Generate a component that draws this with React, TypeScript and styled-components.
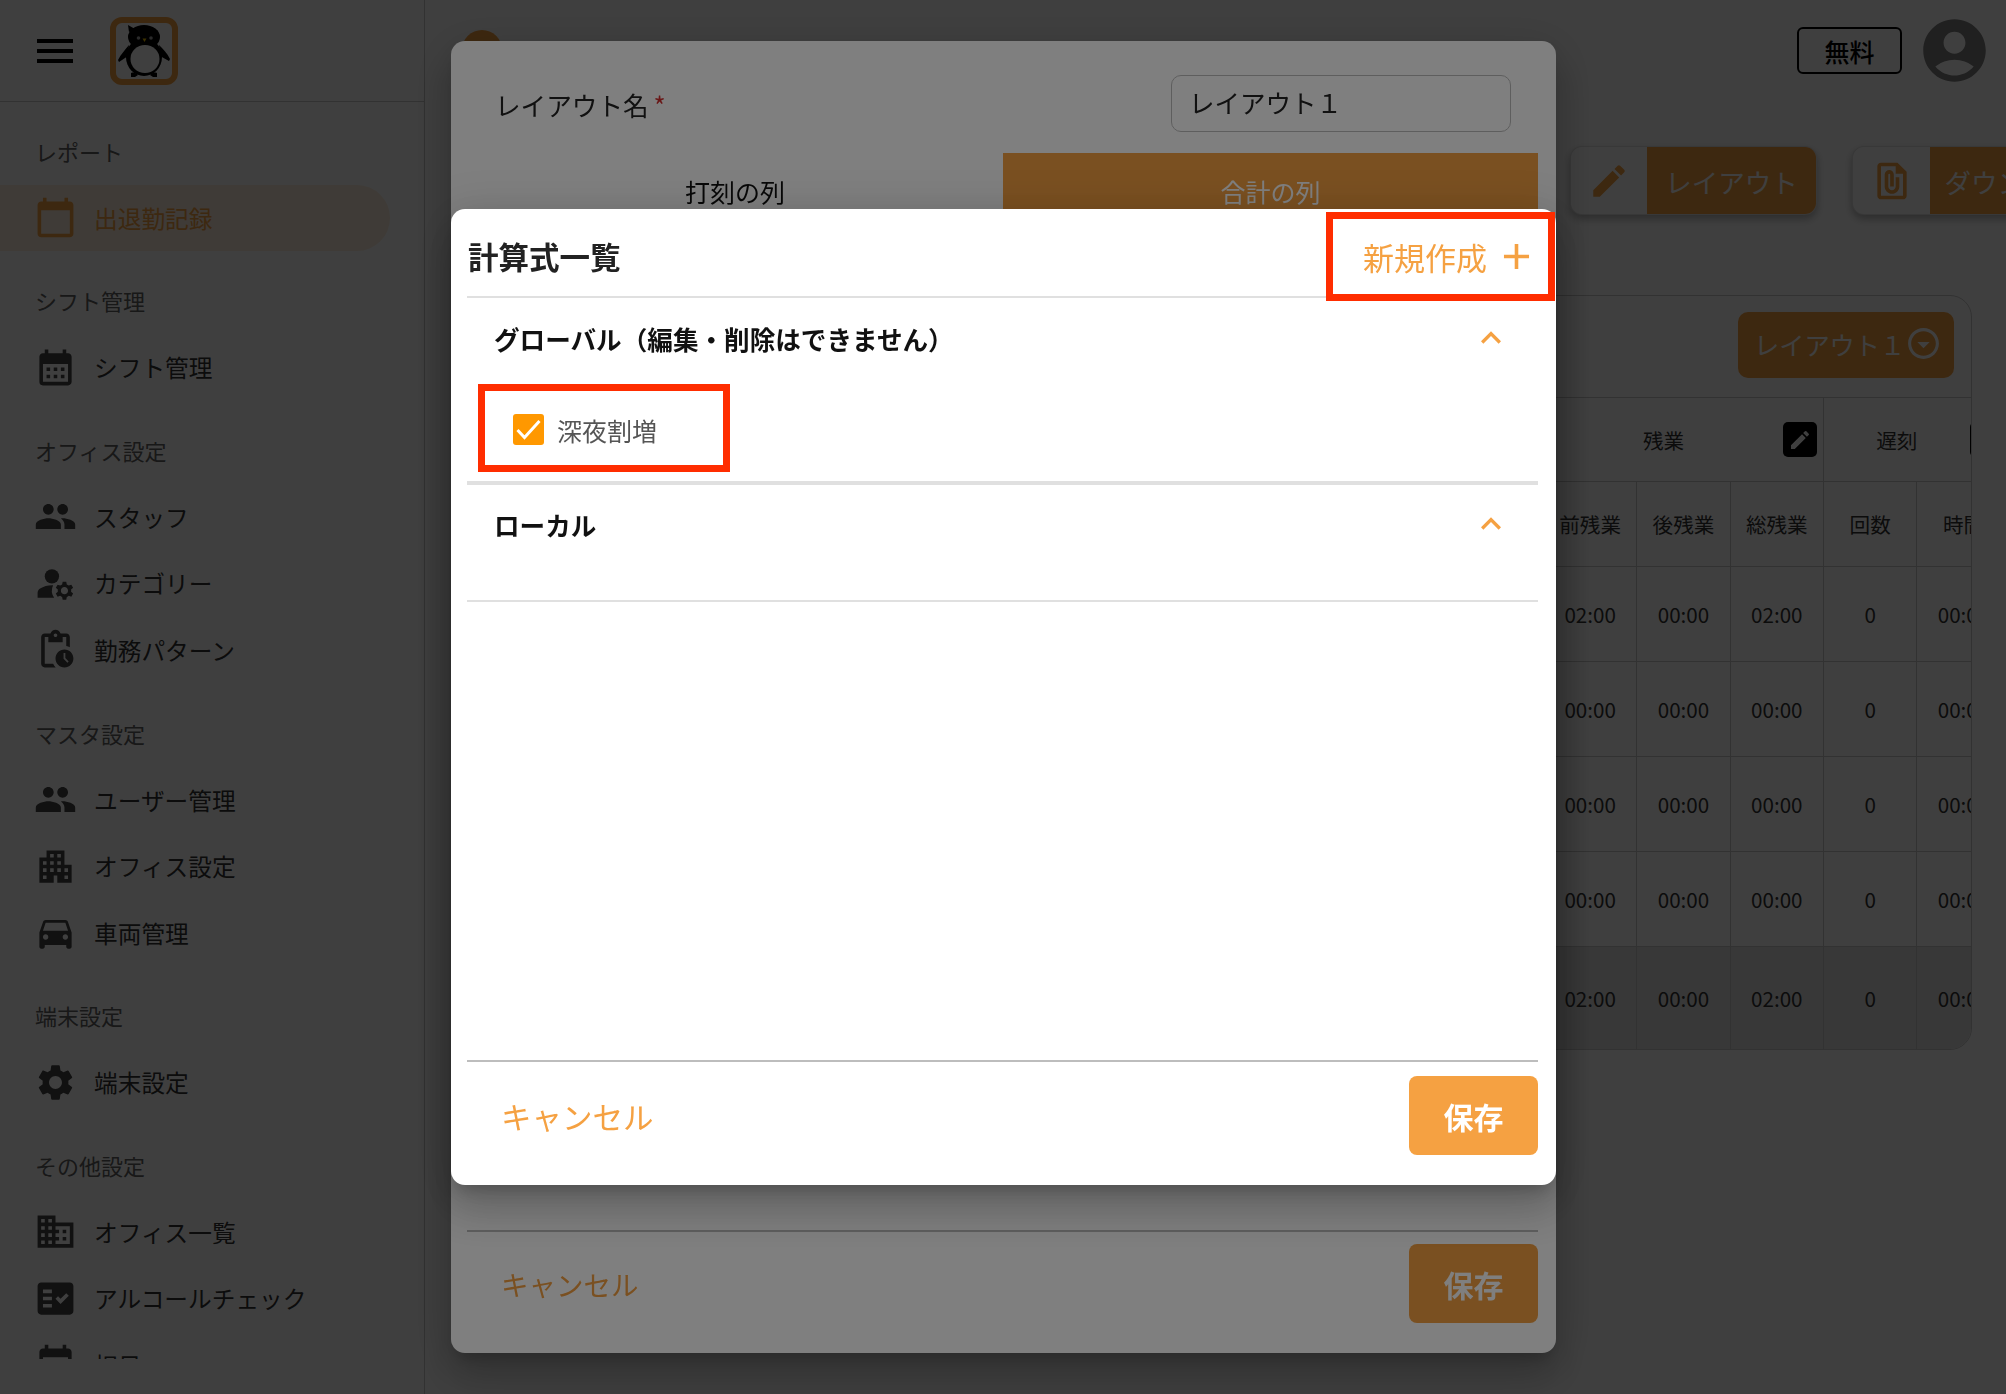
import React, { FC } from "react";
import styled, { createGlobalStyle } from "styled-components";
import { IconType } from "react-icons";
import {
  MdAccountCircle,
  MdAdd,
  MdApartment,
  MdBusiness,
  MdCalendarMonth,
  MdCalendarToday,
  MdDirectionsCar,
  MdEdit,
  MdEvent,
  MdExpandLess,
  MdFactCheck,
  MdFilePresent,
  MdManageAccounts,
  MdMenu,
  MdOutlineArrowDropDownCircle,
  MdPendingActions,
  MdPeople,
  MdSettings,
} from "react-icons/md";

const ORANGE = "#f5a142";

const GlobalStyle = createGlobalStyle`
  html, body {
    margin: 0;
    width: 2006px;
    height: 1394px;
    overflow: hidden;
    background: #fff;
    font-family: "Noto Sans CJK JP", "Noto Sans", sans-serif;
    color: #222;
  }
  * { box-sizing: border-box; }
`;

const Page = styled.div`
  display: flex;
  width: 2006px;
  height: 1394px;
  overflow: hidden;
`;

/* sidebar */
const Sidebar = styled.aside`
  flex: 0 0 425px;
  height: 100%;
  border-right: 1px solid #c8c8c8;
  display: flex;
  flex-direction: column;
`;
const SideHead = styled.div`
  height: 102px;
  flex: none;
  border-bottom: 1px solid #c8c8c8;
  display: flex;
  align-items: center;
  padding-left: 31px;
  gap: 31px;
  color: #000;
`;
const LogoBox = styled.div`
  width: 68px;
  height: 68px;
  border: 6px solid ${ORANGE};
  border-radius: 12px;
  display: flex;
  align-items: center;
  justify-content: center;
`;
const Nav = styled.nav`
  height: 1257px;
  flex: none;
  overflow: hidden;
  padding-top: 15px;
`;
const NavSection = styled.section`
  margin-bottom: 15.6px;
`;
const NavLabel = styled.div`
  height: 67.5px;
  display: flex;
  align-items: center;
  padding-left: 35px;
  font-size: 22px;
  color: #606060;
`;
const NavItem = styled.div<{ $active?: boolean }>`
  height: 66.5px;
  margin-right: 34px;
  display: flex;
  align-items: center;
  gap: 17px;
  padding-left: 34px;
  font-size: 23.7px;
  border-radius: 0 34px 34px 0;
  color: ${(p) => (p.$active ? ORANGE : "#333")};
  background: ${(p) => (p.$active ? "rgba(245, 161, 66, 0.18)" : "transparent")};
  svg {
    flex: none;
    color: ${(p) => (p.$active ? ORANGE : "#444")};
  }
`;

/* main area behind the dialogs */
const Main = styled.main`
  flex: 1;
  min-width: 0;
  display: flex;
  flex-direction: column;
`;
const TopBar = styled.header`
  height: 101px;
  flex: none;
  display: flex;
  align-items: center;
  justify-content: flex-end;
  gap: 15px;
  padding: 0 14px 0 37px;
`;
const UserDot = styled.div`
  width: 40px;
  height: 40px;
  border-radius: 50%;
  background: ${ORANGE};
  margin-right: auto;
  margin-top: -2px;
`;
const PlanTag = styled.div`
  width: 105px;
  height: 47px;
  border: 2px solid #000;
  border-radius: 6px;
  display: flex;
  align-items: center;
  justify-content: center;
  font-size: 25px;
  font-weight: 500;
  color: #000;
`;
const Avatar = styled(MdAccountCircle)`
  color: #808080;
`;
const Toolbar = styled.div`
  margin-top: 45px;
  height: 69px;
  flex: none;
  display: flex;
  gap: 35px;
  padding-left: 1145px;
`;
const ActionButton = styled.div<{ $width: number; $iconWidth: number }>`
  flex: 0 0 ${(p) => p.$width}px;
  height: 69px;
  display: grid;
  grid-template-columns: ${(p) => p.$iconWidth}px 1fr;
  border-radius: 12px;
  overflow: hidden;
  background: #fff;
  box-shadow: 0 4px 8px rgba(0, 0, 0, 0.3);
  border: 1px solid rgba(0, 0, 0, 0.12);
`;
const ActionIcon = styled.div`
  display: flex;
  align-items: center;
  justify-content: center;
  color: ${ORANGE};
`;
const ActionLabel = styled.div`
  background: ${ORANGE};
  color: #fff;
  font-size: 26.5px;
  padding-top: 2px;
  display: flex;
  align-items: center;
  justify-content: center;
  white-space: nowrap;
`;
const TableCard = styled.div`
  margin: 80px 0 0 30px;
  width: 1517px;
  height: 755px;
  flex: none;
  border: 1px solid #c8c8c8;
  border-radius: 22px;
  overflow: hidden;
`;
const CardHead = styled.div`
  height: 101px;
  display: flex;
  justify-content: flex-end;
  padding: 16px 17px 0 0;
`;
const LayoutSelect = styled.div`
  width: 216px;
  height: 66px;
  border-radius: 10px;
  background: ${ORANGE};
  color: #fff;
  display: flex;
  align-items: center;
  padding: 0 0 3px 16px;
  font-size: 25.2px;
  white-space: nowrap;
`;
const Grid = styled.div`
  display: grid;
  grid-template-columns: 1088px repeat(5, 93.33px);
`;
const Cell = styled.div<{ $span?: number; $height: number; $total?: boolean }>`
  grid-column: span ${(p) => p.$span ?? 1};
  height: ${(p) => p.$height}px;
  border-top: 1px solid #c8c8c8;
  border-right: 1px solid #c8c8c8;
  display: flex;
  align-items: center;
  justify-content: center;
  font-size: 20.6px;
  color: #333;
  background: ${(p) => (p.$total ? "#e2e2e2" : "transparent")};
`;
const GroupTitle = styled.span`
  flex: 1;
  text-align: center;
`;
const EditChip = styled.div`
  flex: none;
  width: 34px;
  height: 35px;
  margin-right: 6px;
  border-radius: 5px;
  background: #000;
  color: #fff;
  display: flex;
  align-items: center;
  justify-content: center;
`;

/* dialogs */
const Backdrop = styled.div`
  position: fixed;
  inset: 0;
  background: rgba(0, 0, 0, 0.5);
`;
const Dialog = styled.div<{ $top: number; $height: number }>`
  position: fixed;
  left: 451px;
  top: ${(p) => p.$top}px;
  width: 1105px;
  height: ${(p) => p.$height}px;
  background: #fff;
  border-radius: 14px;
  padding: 0 18px 0 16px;
  display: flex;
  flex-direction: column;
  box-shadow: 0 11px 15px -7px rgba(0, 0, 0, 0.2), 0 24px 38px 3px rgba(0, 0, 0, 0.14),
    0 9px 46px 8px rgba(0, 0, 0, 0.12);
`;
const NameRow = styled.div`
  height: 112px;
  flex: none;
  display: flex;
  align-items: center;
  justify-content: space-between;
  padding: 15px 27px 0 28px;
`;
const NameLabel = styled.label`
  font-size: 25.6px;
  color: #222;
  display: flex;
  align-items: center;
  em {
    color: #d32f2f;
    font-size: 26px;
    font-style: normal;
    margin-left: 5px;
  }
`;
const NameInput = styled.div`
  width: 340px;
  height: 57px;
  margin-top: -3px;
  border: 1px solid #bdbdbd;
  border-radius: 10px;
  padding: 0 0 4px 17px;
  display: flex;
  align-items: center;
  font-size: 25.5px;
  color: #222;
`;
const Tabs = styled.div`
  height: 80px;
  flex: none;
  display: grid;
  grid-template-columns: 536px 535px;
`;
const Tab = styled.div<{ $active?: boolean }>`
  display: flex;
  align-items: center;
  justify-content: center;
  padding-bottom: 5px;
  font-size: 25px;
  color: ${(p) => (p.$active ? "#fff" : "#111")};
  background: ${(p) => (p.$active ? ORANGE : "transparent")};
`;
const Filler = styled.div`
  flex: 1;
`;
const Footer = styled.div<{ $size: number; $padTop: number; $padBottom: number }>`
  flex: none;
  border-top: 2px solid #bdbdbd;
  padding: ${(p) => p.$padTop}px 0 ${(p) => p.$padBottom}px 34px;
  display: flex;
  align-items: center;
  justify-content: space-between;
  color: ${ORANGE};
  font-size: ${(p) => p.$size}px;
`;
const SaveButton = styled.div`
  width: 129px;
  height: 79px;
  border-radius: 8px;
  background: ${ORANGE};
  color: #fff;
  font-size: 30px;
  font-weight: 700;
  display: flex;
  align-items: center;
  justify-content: center;
`;
const DialogHead = styled.div`
  height: 89px;
  flex: none;
  border-bottom: 2px solid #e0e0e0;
  display: flex;
  align-items: center;
  justify-content: space-between;
  padding: 7px 0 0 1px;
`;
const DialogTitle = styled.h2`
  margin: 0;
  font-size: 30.5px;
  font-weight: 700;
  color: #222;
`;
const NewButton = styled.div`
  display: flex;
  align-items: center;
  gap: 8px;
  font-size: 31px;
  color: ${ORANGE};
`;
const AccordionHead = styled.div<{ $height: number }>`
  height: ${(p) => p.$height}px;
  flex: none;
  display: flex;
  align-items: center;
  justify-content: space-between;
  padding: 0 27px 0 27px;
  font-size: 25.6px;
  font-weight: 700;
  color: #111;
  svg {
    color: ${ORANGE};
    margin-top: -1px;
  }
`;
const AccordionBody = styled.div<{ $height: number; $line: number }>`
  height: ${(p) => p.$height}px;
  flex: none;
  border-bottom: ${(p) => p.$line}px solid #e0e0e0;
  display: flex;
  align-items: center;
  gap: 13px;
  padding-left: 46px;
  font-size: 25px;
  color: #555;
`;
const CheckBox = styled.div`
  width: 31px;
  height: 31px;
  border-radius: 3px;
  background: #ff9800;
`;
const Callout = styled.div<{ $left: number; $top: number; $width: number; $height: number }>`
  position: absolute;
  left: ${(p) => p.$left}px;
  top: ${(p) => p.$top}px;
  width: ${(p) => p.$width}px;
  height: ${(p) => p.$height}px;
  border: 7px solid #ff2d00;
  pointer-events: none;
`;

type NavEntry = { icon: IconType; text: string; active?: boolean };
const sections: { title: string; items: NavEntry[] }[] = [
  { title: "レポート", items: [{ icon: MdCalendarToday, text: "出退勤記録", active: true }] },
  { title: "シフト管理", items: [{ icon: MdCalendarMonth, text: "シフト管理" }] },
  {
    title: "オフィス設定",
    items: [
      { icon: MdPeople, text: "スタッフ" },
      { icon: MdManageAccounts, text: "カテゴリー" },
      { icon: MdPendingActions, text: "勤務パターン" },
    ],
  },
  {
    title: "マスタ設定",
    items: [
      { icon: MdPeople, text: "ユーザー管理" },
      { icon: MdApartment, text: "オフィス設定" },
      { icon: MdDirectionsCar, text: "車両管理" },
    ],
  },
  { title: "端末設定", items: [{ icon: MdSettings, text: "端末設定" }] },
  {
    title: "その他設定",
    items: [
      { icon: MdBusiness, text: "オフィス一覧" },
      { icon: MdFactCheck, text: "アルコールチェック" },
      { icon: MdEvent, text: "祝日" },
    ],
  },
];

const rows = [
  { h: 95, v: ["02:00", "00:00", "02:00", "0", "00:00"] },
  { h: 95, v: ["00:00", "00:00", "00:00", "0", "00:00"] },
  { h: 95, v: ["00:00", "00:00", "00:00", "0", "00:00"] },
  { h: 95, v: ["00:00", "00:00", "00:00", "0", "00:00"] },
  { h: 103, v: ["02:00", "00:00", "02:00", "0", "00:00"], total: true },
];

const Penguin: FC = () => (
  <svg width="56" height="56" viewBox="0 0 56 56">
    <ellipse cx="28" cy="14" rx="16" ry="12" fill="#000" />
    <path d="M13 9l-1-7 7 4z" fill="#000" />
    <ellipse cx="28" cy="34" rx="18" ry="19" fill="#000" />
    <path d="M13 22C9 27 5 31 2 37l1 2 9-6zM43 22c4 4 8 8 11 14l-1 2-9-5z" fill="#000" />
    <path d="M15 50c3-1 5 0 7 2l-3 2h-4zM41 50c-3-1-5 0-7 2l3 2h4z" fill="#000" />
    <ellipse cx="29" cy="36" rx="14.5" ry="14" fill="#fff" />
    <circle cx="22.5" cy="15" r="1.8" fill="#aaa" />
    <circle cx="35" cy="15" r="1.8" fill="#aaa" />
    <path d="M26.5 15.500h4l-2 3.500z" fill="#f5c400" />
  </svg>
);

const App: FC = () => (
  <>
    <GlobalStyle />
    <Page>
      <Sidebar>
        <SideHead>
          <MdMenu size={48} />
          <LogoBox>
            <Penguin />
          </LogoBox>
        </SideHead>
        <Nav>
          {sections.map((s) => (
            <NavSection key={s.title}>
              <NavLabel>{s.title}</NavLabel>
              {s.items.map(({ icon: Icon, text, active }) => (
                <NavItem key={text} $active={active}>
                  <Icon size={43} />
                  {text}
                </NavItem>
              ))}
            </NavSection>
          ))}
        </Nav>
      </Sidebar>
      <Main>
        <TopBar>
          <UserDot />
          <PlanTag>無料</PlanTag>
          <Avatar size={75} />
        </TopBar>
        <Toolbar>
          <ActionButton $width={247} $iconWidth={76}>
            <ActionIcon>
              <MdEdit size={42} />
            </ActionIcon>
            <ActionLabel>レイアウト</ActionLabel>
          </ActionButton>
          <ActionButton $width={267} $iconWidth={77}>
            <ActionIcon>
              <MdFilePresent size={44} />
            </ActionIcon>
            <ActionLabel>ダウンロード</ActionLabel>
          </ActionButton>
        </Toolbar>
        <TableCard>
          <CardHead>
            <LayoutSelect>
              レイアウト１
              <MdOutlineArrowDropDownCircle size={37} />
            </LayoutSelect>
          </CardHead>
          <Grid>
            <Cell $height={84} />
            <Cell $span={3} $height={84}>
              <GroupTitle>残業</GroupTitle>
              <EditChip>
                <MdEdit size={24} />
              </EditChip>
            </Cell>
            <Cell $span={2} $height={84}>
              <GroupTitle>遅刻</GroupTitle>
              <EditChip>
                <MdEdit size={24} />
              </EditChip>
            </Cell>
            <Cell $height={85} />
            {["前残業", "後残業", "総残業", "回数", "時間"].map((t) => (
              <Cell key={t} $height={85}>
                {t}
              </Cell>
            ))}
            {rows.map((r, i) => (
              <React.Fragment key={i}>
                <Cell $height={r.h} $total={r.total} />
                {r.v.map((v, j) => (
                  <Cell key={j} $height={r.h} $total={r.total}>
                    {v}
                  </Cell>
                ))}
              </React.Fragment>
            ))}
          </Grid>
        </TableCard>
      </Main>
    </Page>

    <Backdrop />
    <Dialog $top={41} $height={1312}>
      <NameRow>
        <NameLabel>
          レイアウト名<em>*</em>
        </NameLabel>
        <NameInput>レイアウト１</NameInput>
      </NameRow>
      <Tabs>
        <Tab>打刻の列</Tab>
        <Tab $active>合計の列</Tab>
      </Tabs>
      <Filler />
      <Footer $size={27.5} $padTop={12} $padBottom={30}>
        キャンセル
        <SaveButton>保存</SaveButton>
      </Footer>
    </Dialog>

    <Backdrop />
    <Dialog $top={209} $height={976}>
      <DialogHead>
        <DialogTitle>計算式一覧</DialogTitle>
        <NewButton>
          新規作成
          <MdAdd size={43} />
        </NewButton>
      </DialogHead>
      <AccordionHead $height={80}>
        グローバル（編集・削除はできません）
        <MdExpandLess size={40} />
      </AccordionHead>
      <AccordionBody $height={107} $line={4}>
        <CheckBox>
          <svg width="31" height="31" viewBox="0 0 31 31" fill="none">
            <path d="M4.500 16l7 7.500L26.500 7" stroke="#fff" strokeWidth="3" />
          </svg>
        </CheckBox>
        深夜割増
      </AccordionBody>
      <AccordionHead $height={79}>
        ローカル
        <MdExpandLess size={40} />
      </AccordionHead>
      <AccordionBody $height={38} $line={2} />
      <Filler />
      <Footer $size={30.5} $padTop={14} $padBottom={30}>
        キャンセル
        <SaveButton>保存</SaveButton>
      </Footer>
      <Callout $left={875} $top={3} $width={229} $height={89} />
      <Callout $left={27} $top={175} $width={252} $height={88} />
    </Dialog>
  </>
);

export default App;
